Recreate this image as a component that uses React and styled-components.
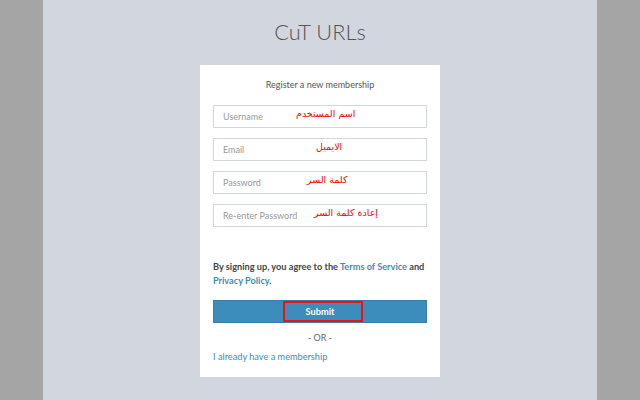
import React from 'react';
import styled, { createGlobalStyle } from 'styled-components';

const Global = createGlobalStyle`
  html, body { margin: 0; padding: 0; height: 400px; overflow: hidden; }
  body { font-family: Lato, "Liberation Sans", sans-serif; background: #a5a5a5; }
`;

const Page = styled.div`
  display: flex;
  justify-content: center;
  height: 400px;
`;

const Center = styled.div`
  width: 554px;
  background: #d2d6de;
  display: flex;
  flex-direction: column;
  align-items: center;
`;

const Logo = styled.h1`
  margin: 0;
  height: 65px;
  line-height: 64px;
  font-size: 21.8px;
  font-weight: 300;
  color: #555;
  letter-spacing: 0.1px;
`;

const Box = styled.div`
  width: 240px;
  box-sizing: border-box;
  background: #fff;
  padding: 13px 13px 13px;
`;

const BoxMsg = styled.p`
  margin: 0 0 13px;
  text-align: center;
  font-size: 9px;
  line-height: 14px;
  color: #555;
`;

const Field = styled.div`
  position: relative;
  height: 23px;
  box-sizing: border-box;
  border: 1px solid #d2d6de;
  margin-bottom: 10px;
  display: flex;
  align-items: center;
  padding-left: 9px;
  font-size: 9px;
  color: #999;
`;

const Note = styled.span`
  position: absolute;
  left: ${p => p.$left}px;
  top: 2px;
  color: #f00;
  font-family: "DejaVu Sans", sans-serif;
  font-size: 9.5px;
  direction: rtl;
`;

const Terms = styled.p`
  margin: 33px 0 12px;
  font-size: 9.2px;
  font-weight: 700;
  line-height: 14px;
  color: #444;
`;

const Link = styled.a`
  color: #3c8dbc;
  text-decoration: none;
  font-weight: ${p => (p.$bold ? 700 : 400)};
`;

const Button = styled.div`
  position: relative;
  height: 23px;
  background: #3c8dbc;
  border: 1px solid #367fa9;
  box-sizing: border-box;
  display: flex;
  align-items: center;
  justify-content: center;
  color: #fff;
  font-size: 9.2px;
  font-weight: 700;
`;

const Highlight = styled.span`
  position: absolute;
  left: 69px;
  top: 0;
  width: 80px;
  height: 21px;
  box-sizing: border-box;
  border: 2px solid #ee1111;
`;

const Or = styled.p`
  margin: 8px 0 0;
  text-align: center;
  font-size: 9px;
  color: #666;
  line-height: 14px;
`;

const Bottom = styled.p`
  margin: 5px 0 0;
  font-size: 9.2px;
  line-height: 14px;
`;

const fields = [
  { ph: 'Username', note: 'اسم المستخدم', left: 82 },
  { ph: 'Email', note: 'الايميل', left: 102 },
  { ph: 'Password', note: 'كلمة السر', left: 93 },
  { ph: 'Re-enter Password', note: 'إعادة كلمة السر', left: 100 },
];

export default function App() {
  return (
    <Page>
      <Global />
      <Center>
        <Logo>CuT URLs</Logo>
        <Box>
          <BoxMsg>Register a new membership</BoxMsg>
          {fields.map(f => (
            <Field key={f.ph}>
              {f.ph}
              <Note $left={f.left}>{f.note}</Note>
            </Field>
          ))}
          <Terms>
            By signing up, you agree to the <Link $bold>Terms of Service</Link> and{' '}
            <Link $bold>Privacy Policy</Link>.
          </Terms>
          <Button>
            Submit
            <Highlight />
          </Button>
          <Or>- OR -</Or>
          <Bottom>
            <Link>I already have a membership</Link>
          </Bottom>
        </Box>
      </Center>
    </Page>
  );
}
